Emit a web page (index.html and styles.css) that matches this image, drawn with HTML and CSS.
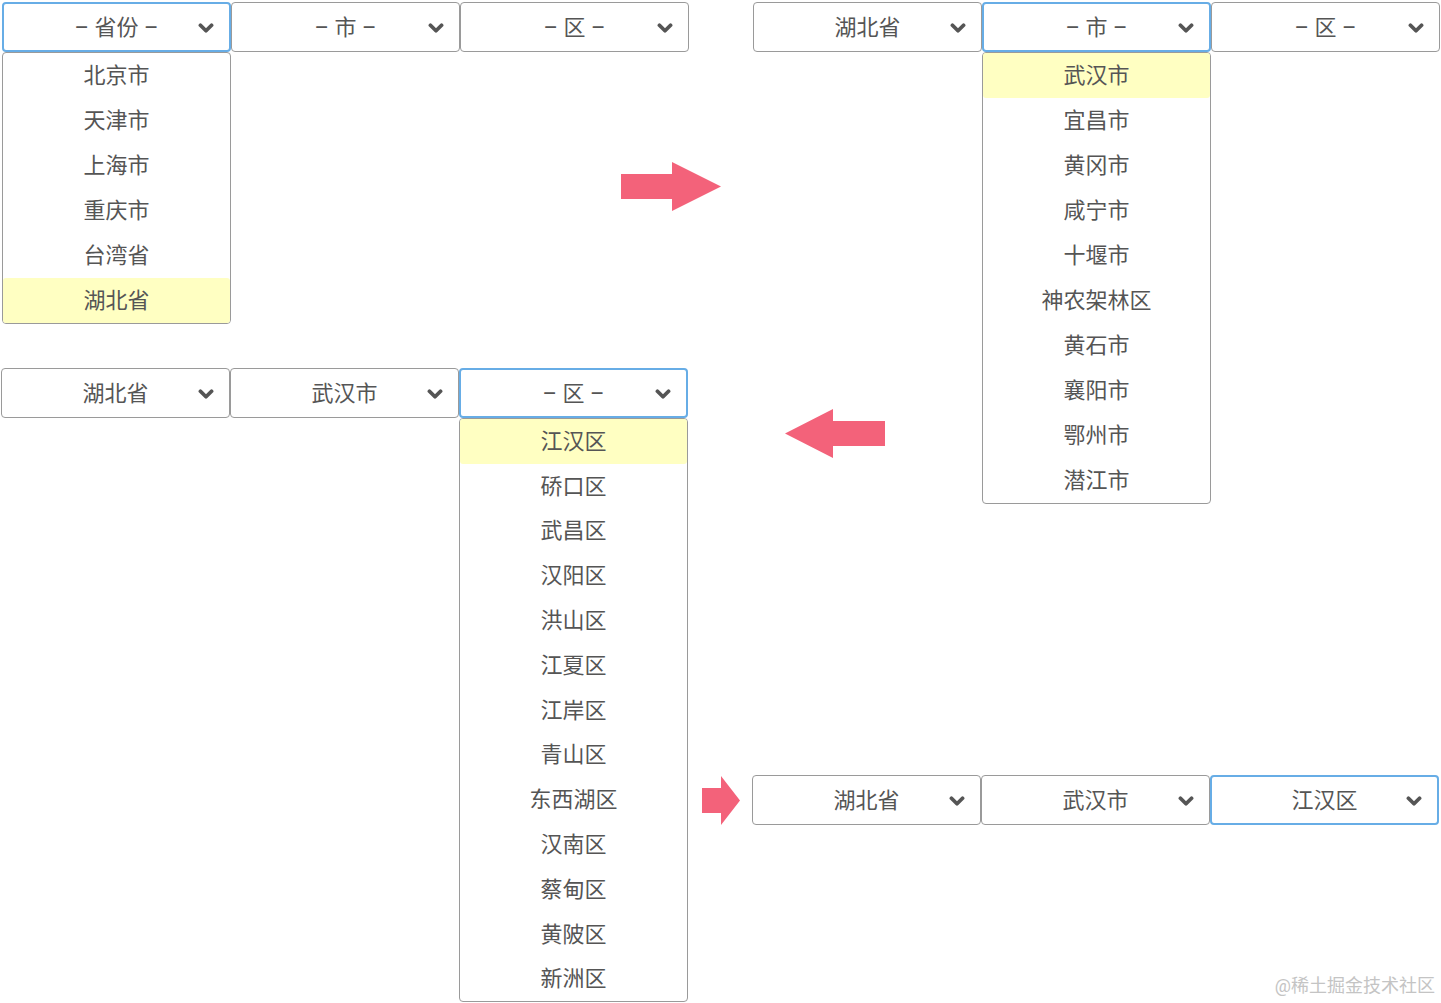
FILE: index.html
```html
<!DOCTYPE html>
<html lang="zh-CN">
<head>
    <meta charset="UTF-8">
    <title>省市区三级联动</title>
    <link rel="stylesheet" href="styles.css">
</head>
<body>
    <div class="board">

        <!-- 第一步：选择省份 -->
        <div class="step step-1">
            <div class="picker">
                <div class="select is-focus">– 省份 –<svg class="chevron" viewBox="0 0 14 9"><polyline points="2,2 7,7 12,2"/></svg></div>
                <ul class="options">
                    <li>北京市</li>
                    <li>天津市</li>
                    <li>上海市</li>
                    <li>重庆市</li>
                    <li>台湾省</li>
                    <li class="is-active">湖北省</li>
                </ul>
            </div>
            <div class="picker">
                <div class="select">– 市 –<svg class="chevron" viewBox="0 0 14 9"><polyline points="2,2 7,7 12,2"/></svg></div>
            </div>
            <div class="picker">
                <div class="select">– 区 –<svg class="chevron" viewBox="0 0 14 9"><polyline points="2,2 7,7 12,2"/></svg></div>
            </div>
        </div>

        <!-- 第二步：选择城市 -->
        <div class="step step-2">
            <div class="picker">
                <div class="select">湖北省<svg class="chevron" viewBox="0 0 14 9"><polyline points="2,2 7,7 12,2"/></svg></div>
            </div>
            <div class="picker">
                <div class="select is-focus">– 市 –<svg class="chevron" viewBox="0 0 14 9"><polyline points="2,2 7,7 12,2"/></svg></div>
                <ul class="options">
                    <li class="is-active">武汉市</li>
                    <li>宜昌市</li>
                    <li>黄冈市</li>
                    <li>咸宁市</li>
                    <li>十堰市</li>
                    <li>神农架林区</li>
                    <li>黄石市</li>
                    <li>襄阳市</li>
                    <li>鄂州市</li>
                    <li>潜江市</li>
                </ul>
            </div>
            <div class="picker">
                <div class="select">– 区 –<svg class="chevron" viewBox="0 0 14 9"><polyline points="2,2 7,7 12,2"/></svg></div>
            </div>
        </div>

        <!-- 第三步：选择区县 -->
        <div class="step step-3">
            <div class="picker">
                <div class="select">湖北省<svg class="chevron" viewBox="0 0 14 9"><polyline points="2,2 7,7 12,2"/></svg></div>
            </div>
            <div class="picker">
                <div class="select">武汉市<svg class="chevron" viewBox="0 0 14 9"><polyline points="2,2 7,7 12,2"/></svg></div>
            </div>
            <div class="picker">
                <div class="select is-focus">– 区 –<svg class="chevron" viewBox="0 0 14 9"><polyline points="2,2 7,7 12,2"/></svg></div>
                <ul class="options options-long">
                    <li class="is-active">江汉区</li>
                    <li>硚口区</li>
                    <li>武昌区</li>
                    <li>汉阳区</li>
                    <li>洪山区</li>
                    <li>江夏区</li>
                    <li>江岸区</li>
                    <li>青山区</li>
                    <li>东西湖区</li>
                    <li>汉南区</li>
                    <li>蔡甸区</li>
                    <li>黄陂区</li>
                    <li>新洲区</li>
                </ul>
            </div>
        </div>

        <!-- 完成 -->
        <div class="step step-4">
            <div class="picker">
                <div class="select">湖北省<svg class="chevron" viewBox="0 0 14 9"><polyline points="2,2 7,7 12,2"/></svg></div>
            </div>
            <div class="picker">
                <div class="select">武汉市<svg class="chevron" viewBox="0 0 14 9"><polyline points="2,2 7,7 12,2"/></svg></div>
            </div>
            <div class="picker">
                <div class="select is-focus">江汉区<svg class="chevron" viewBox="0 0 14 9"><polyline points="2,2 7,7 12,2"/></svg></div>
            </div>
        </div>

        <!-- 流程箭头 -->
        <svg class="arrow arrow-right" viewBox="0 0 100 50"><polygon points="0,12 51,12 51,0 100,24.5 51,49 51,37 0,37"/></svg>
        <svg class="arrow arrow-left" viewBox="0 0 100 50"><polygon points="100,12 48,12 48,0 0,24.5 48,49 48,37 100,37"/></svg>
        <svg class="arrow arrow-small" viewBox="0 0 38 49"><polygon points="0,12 19,12 19,0 38,24.5 19,49 19,37 0,37"/></svg>

        <div class="watermark">@稀土掘金技术社区</div>
    </div>
</body>
</html>
```

FILE: styles.css
```css
* {
    margin: 0;
    padding: 0;
    box-sizing: border-box;
}

body {
    font-family: Roboto, "Noto Sans CJK SC", sans-serif;
    background: #fff;
    color: #555;
}

/* 画布：四个状态按流程摆放 */
.board {
    position: relative;
    width: 1441px;
    height: 1003px;
    overflow: hidden;
}

.step {
    position: absolute;
    display: flex;
}

.step-1 { left: 2px; top: 2px; }
.step-2 { left: 753px; top: 2px; }
.step-3 { left: 1px; top: 368px; }
.step-4 { left: 752px; top: 775px; }

.picker {
    position: relative;
    width: 229px;
}

.select {
    position: relative;
    height: 50px;
    padding-bottom: 5px;
    border: 1px solid #9a9a9a;
    border-radius: 4px;
    display: flex;
    align-items: center;
    justify-content: center;
    font-size: 22px;
    color: #555;
    background: #fff;
}

.select.is-focus {
    border: 2px solid #67ade6;
}

.chevron {
    position: absolute;
    right: 15px;
    top: 50%;
    width: 16px;
    height: 10px;
    margin-top: -4px;
    fill: none;
    stroke: #555;
    stroke-width: 3.4;
    stroke-linecap: round;
    stroke-linejoin: round;
}

/* 下拉选项 */
.options {
    position: absolute;
    left: 0;
    top: 50px;
    width: 100%;
    list-style: none;
    border: 1px solid #9a9a9a;
    border-radius: 4px;
    background: #fff;
}

.options li {
    height: 45px;
    padding-bottom: 5px;
    display: flex;
    align-items: center;
    justify-content: center;
    font-size: 22px;
    color: #555;
}

.options-long li {
    height: 44.8px;
}

.options li.is-active {
    background: #ffffc2;
    border-radius: 3px;
}

.arrow {
    position: absolute;
    fill: #f3627a;
}

.arrow-right { left: 621px; top: 162px; width: 100px; height: 50px; }
.arrow-left { left: 785px; top: 409px; width: 100px; height: 50px; }
.arrow-small { left: 702px; top: 776px; width: 38px; height: 49px; }

.watermark {
    position: absolute;
    right: 6px;
    bottom: 6px;
    font-size: 18px;
    color: #c4c4c4;
}
```
